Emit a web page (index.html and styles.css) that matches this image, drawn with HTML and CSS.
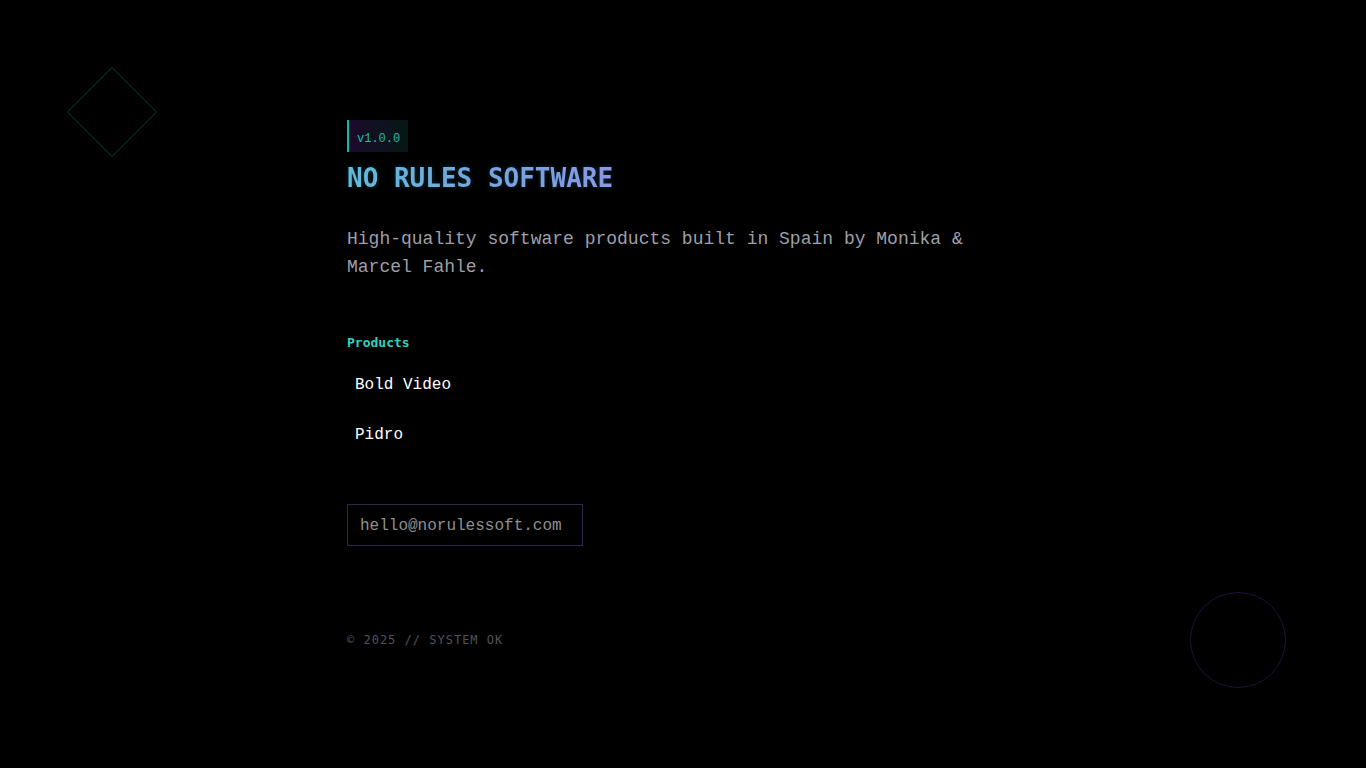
FILE: index.html
```html
<!DOCTYPE html>
<html lang="en">
<head>
<meta charset="utf-8">
<meta name="viewport" content="width=device-width, initial-scale=1">
<title>No Rules Software</title>
<link rel="stylesheet" href="styles.css">
</head>
<body>
<div class="shape diamond" aria-hidden="true"></div>
<div class="shape circle" aria-hidden="true"></div>
<main class="page">
  <header class="intro">
    <span class="version">v1.0.0</span>
    <h1 class="title">NO RULES SOFTWARE</h1>
    <p class="lead">High-quality software products built in Spain by Monika &amp; Marcel Fahle.</p>
  </header>
  <section class="products">
    <h2 class="products-title">Products</h2>
    <ul class="product-list">
      <li><a class="product-link" href="#bold-video">Bold Video</a></li>
      <li><a class="product-link" href="#pidro">Pidro</a></li>
    </ul>
  </section>
  <a class="contact" href="mailto:hello@norulessoft.com">hello@norulessoft.com</a>
  <footer class="footer">© 2025 // SYSTEM OK</footer>
</main>
</body>
</html>
```
FILE: styles.css
```css
* {
  box-sizing: border-box;
}

body {
  margin: 0;
  min-height: 100vh;
  display: flex;
  justify-content: center;
  align-items: center;
  background: #000;
  color: #fff;
  font-family: "DejaVu Sans Mono", "Liberation Mono", monospace;
  font-size: 16px;
  line-height: 24px;
  overflow-x: hidden;
}

.page {
  display: flex;
  flex-direction: column;
  align-items: flex-start;
  width: 100%;
  max-width: 672px;
}

.intro {
  display: flex;
  flex-direction: column;
  align-items: flex-start;
}

.version {
  padding: 11px 8px 5px;
  border-left: 2px solid #14b8a6;
  background: linear-gradient(90deg, #1c0a2a, #051816);
  color: #2bb8a4;
  font-family: "Liberation Mono", monospace;
  font-size: 12px;
  line-height: 16px;
}

.title {
  margin: 8px 0 29px;
  background: linear-gradient(90deg, #6fc0dc, #84a8e4 50%, #a096ec);
  -webkit-background-clip: text;
  background-clip: text;
  color: transparent;
  font-size: 26px;
  font-weight: 700;
  line-height: 36px;
  text-shadow: 0 0 5px rgba(45, 160, 200, 0.3);
}

.lead {
  margin: 0;
  color: #9f9fa9;
  font-family: "Liberation Mono", monospace;
  font-size: 18px;
  line-height: 28px;
}

.products {
  margin-top: 50px;
}

.products-title {
  margin: 0 0 9px;
  color: #2dd4bf;
  font-size: 13px;
  font-weight: 700;
  line-height: 24px;
}

.product-list {
  display: flex;
  flex-direction: column;
  gap: 8px;
  margin: 0;
  padding: 0;
  list-style: none;
}

.product-link {
  display: inline-block;
  padding: 8px;
  color: #fff;
  line-height: 26px;
  text-decoration: none;
}

.product-list,
.contact {
  font-family: "Liberation Mono", monospace;
}

.contact {
  min-width: 236px;
  margin-top: 48px;
  padding: 9px 12px 7px;
  border: 1px solid #2f2649;
  color: #8f8f8f;
  text-decoration: none;
}

.footer {
  margin-top: 86px;
  color: #52525c;
  font-size: 12px;
  line-height: 16px;
  letter-spacing: 1px;
}

.shape {
  position: absolute;
  pointer-events: none;
}

.diamond {
  top: 80px;
  left: 80px;
  width: 64px;
  height: 64px;
  border: 1px solid #042f28;
  transform: rotate(45deg);
}

.circle {
  right: 80px;
  bottom: 80px;
  width: 96px;
  height: 96px;
  border: 1px solid #23113a;
  border-radius: 50%;
}
```
